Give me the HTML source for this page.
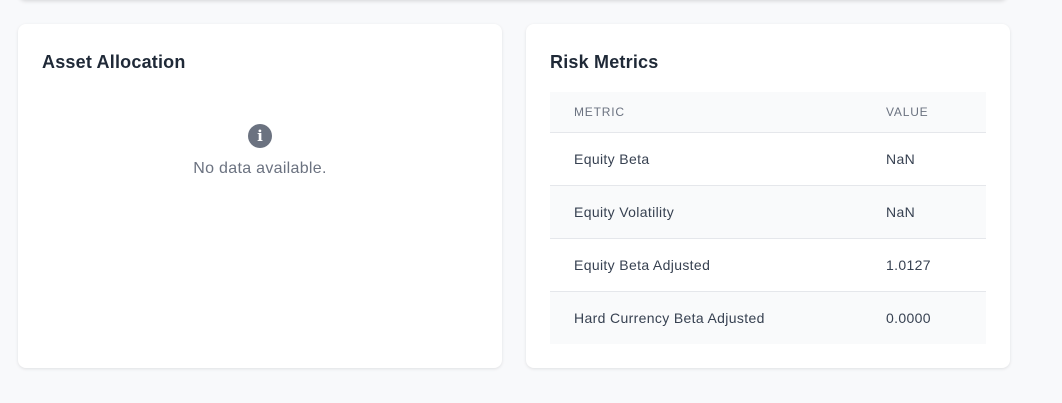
<!DOCTYPE html><html><head><style>
body{margin:0;width:1062px;height:403px;background:#f8f9fb;font-family:"Liberation Sans",sans-serif;position:relative;overflow:hidden}
.top{position:absolute;left:18px;top:-20px;width:990px;height:20px;background:#fff;box-shadow:0 1px 4px rgba(0,0,0,.15);border-radius:0 0 8px 8px}
.card{position:absolute;top:24px;height:344px;background:#fff;border-radius:8px;box-shadow:0 1px 3px rgba(0,0,0,.1)}
h2{position:absolute;left:24px;top:28px;margin:0;font-size:18px;font-weight:bold;color:#1f2937;letter-spacing:.2px}
.nd{position:absolute;left:0;right:0;top:100px;text-align:center;color:#6b7280;font-size:16px;letter-spacing:.3px}
.ic{width:24px;height:24px;border-radius:50%;background:#6b7280;color:#fff;font-weight:bold;font-size:15px;line-height:24px;margin:0 auto 12px;font-family:"DejaVu Serif",serif;letter-spacing:0}
table{position:absolute;left:24px;top:68px;width:436px;border-collapse:collapse;font-size:14px;color:#374151;letter-spacing:.35px}
th{height:40px;background:#f9fafb;text-align:left;font-size:12px;font-weight:normal;color:#6b7280;letter-spacing:.8px;border-bottom:1px solid #e5e7eb;padding:0 0 0 24px}
td{height:52px;padding:0 0 0 24px;border-bottom:1px solid #e5e7eb}
tr:nth-child(even) td{background:#f9fafb}
tr:last-child td{border-bottom:none}
</style></head><body>
<div class="top"></div>
<div class="card" style="left:18px;width:484px"><h2>Asset Allocation</h2><div class="nd"><div class="ic">i</div>No data available.</div></div>
<div class="card" style="left:526px;width:484px"><h2>Risk Metrics</h2>
<table><thead><tr><th style="width:288px">METRIC</th><th>VALUE</th></tr></thead><tbody>
<tr><td>Equity Beta</td><td>NaN</td></tr>
<tr><td>Equity Volatility</td><td>NaN</td></tr>
<tr><td>Equity Beta Adjusted</td><td>1.0127</td></tr>
<tr><td>Hard Currency Beta Adjusted</td><td>0.0000</td></tr>
</tbody></table></div>
</body></html>
